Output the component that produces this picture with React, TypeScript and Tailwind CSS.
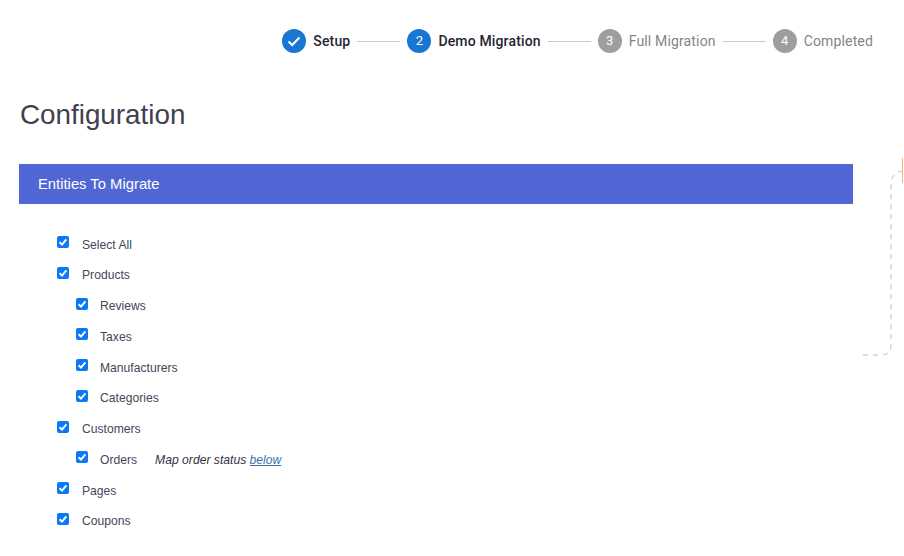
const steps = [
  { label: "Setup", state: "done" },
  { label: "Demo Migration", state: "active" },
  { label: "Full Migration", state: "todo" },
  { label: "Completed", state: "todo" },
];

const entities = [
  { label: "Select All", nested: false },
  { label: "Products", nested: false },
  { label: "Reviews", nested: true },
  { label: "Taxes", nested: true },
  { label: "Manufacturers", nested: true },
  { label: "Categories", nested: true },
  { label: "Customers", nested: false },
  { label: "Orders", nested: true, note: true },
  { label: "Pages", nested: false },
  { label: "Coupons", nested: false },
];

function Stepper() {
  return (
    <div className="flex h-[83px] items-center justify-end pr-[31px] pb-[1px] font-['Roboto',sans-serif] text-[14px]">
      {steps.map((step, i) => (
        <div key={step.label} className="flex items-center">
          {i > 0 && <div className="mx-[7px] h-px w-[43px] bg-[#c9c9c9]" />}
          <div
            className={`flex h-[24px] w-[24px] items-center justify-center rounded-full text-[13px] text-white ${
              step.state === "todo" ? "bg-[#9e9e9e]" : "bg-[#1976d2]"
            }`}
          >
            {step.state === "done" ? (
              <svg width="16" height="16" viewBox="0 0 16 16" fill="none">
                <path d="M2.5 8.5 L6.2 12 L13.5 4.5" stroke="white" strokeWidth="2" />
              </svg>
            ) : (
              i + 1
            )}
          </div>
          <span
            className={`ml-[7px] tracking-[0.15px] ${
              step.state === "todo" ? "text-[#858585]" : "font-medium text-[#262633]"
            }`}
          >
            {step.label}
          </span>
        </div>
      ))}
    </div>
  );
}

function EntityRow({ label, nested, note }: { label: string; nested: boolean; note?: boolean }) {
  return (
    <li className={`flex h-[30.75px] items-center ${nested ? "pl-[19px]" : ""}`}>
      <span className="mb-[5px] flex h-[12px] w-[12px] items-center justify-center rounded-[2px] bg-[#0b78f5]">
        <svg width="10" height="10" viewBox="0 0 10 10" fill="none">
          <path d="M1.6 5.2 L4 7.6 L8.4 2.4" stroke="white" strokeWidth="2" />
        </svg>
      </span>
      <span className={nested ? "ml-[12px]" : "ml-[13px]"}>{label}</span>
      {note && (
        <em className="ml-[18px] text-[#33333f]">
          Map order status <a className="text-[#3b73a8] underline">below</a>
        </em>
      )}
    </li>
  );
}

export default function App() {
  return (
    <div className="relative h-[556px] w-[904px] overflow-hidden bg-white font-['Liberation_Sans',sans-serif]">
      <Stepper />
      <h1 className="ml-[20px] mt-[12px] text-[27.8px] leading-[40px] text-[#3f3f4f]">Configuration</h1>
      <div className="ml-[19px] mt-[29px] flex h-[40px] w-[834px] items-center bg-[#5066d4] pl-[19px] text-[14.8px] text-white">
        Entities To Migrate
      </div>
      <ul className="ml-[57px] mt-[25.3px] text-[12.15px] text-[#46465a]">
        {entities.map((item) => (
          <EntityRow key={item.label} {...item} />
        ))}
      </ul>

      {/* connector peeking in from the right */}
      <svg className="absolute left-[860px] top-[155px]" width="44" height="205" fill="none">
        <path
          d="M3 200 H21 Q31 200 31 190 V30 Q31 18 42 16"
          stroke="#bdbdbd"
          strokeDasharray="5 5"
        />
        <path d="M42.5 3 V28" stroke="#f5b27a" />
      </svg>
    </div>
  );
}
